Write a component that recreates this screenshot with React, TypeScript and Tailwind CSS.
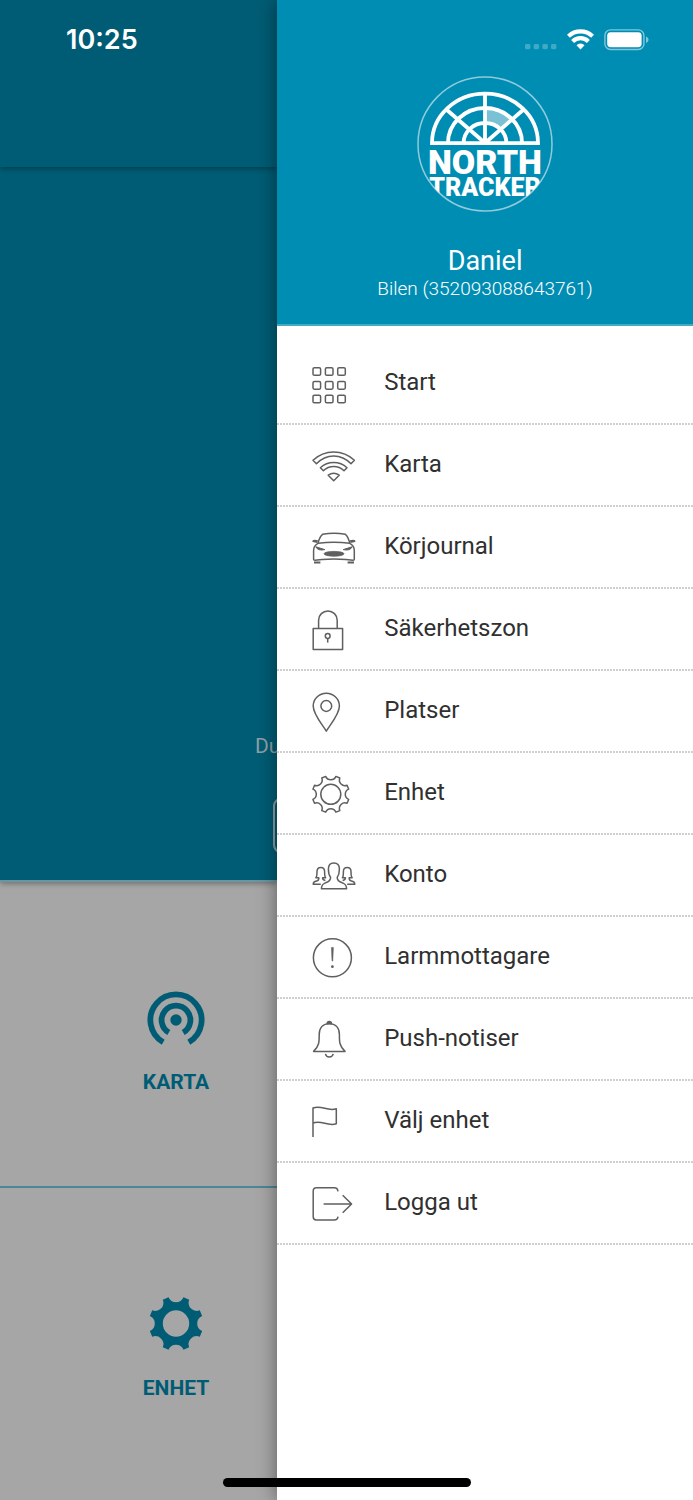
import React from "react";

function gearPath(cx: number, cy: number, r: number): string {
  const point = (deg: number) => {
    const a = (deg * Math.PI) / 180;
    return `${(cx + r * Math.sin(a)).toFixed(2)} ${(cy - r * Math.cos(a)).toFixed(2)}`;
  };
  const scoop = (r * 0.3).toFixed(2);
  let d = `M${point(-16)}`;
  for (let k = 0; k < 8; k++) {
    const a = k * 45;
    d += ` A${scoop} ${scoop} 0 0 0 ${point(a + 16)} L${point(a + 29)}`;
  }
  return d + "Z";
}

const icons: Record<string, React.ReactNode> = {
  grid: [8.5, 22.4, 36].map((y) =>
    [5.8, 18.2, 30.5].map((x) => (
      <rect key={`${x}-${y}`} x={x - 3.8} y={y - 3.8} width="7.6" height="7.6" rx="1.4" />
    )),
  ),
  wifi: (
    <>
      <path d="M2 15.3Q10.8 7 22.7 7T43.4 15.3L40 18.8Q32.5 11 22.7 11T5.4 18.8Z" />
      <path d="M9.4 22.7Q15 17.6 22.7 17.6T36 22.7L33 25.8Q28.6 21.6 22.7 21.6T12.4 25.8Z" />
      <path d="M17.2 30.2Q22.7 26.4 28.2 30.2L22.7 35.8Z" />
    </>
  ),
  car: (
    <>
      <path d="M7 16.3Q8.6 9.5 11.6 7.3Q23 5.2 34.4 7.3Q37.2 9.5 38.8 16.3" />
      <path d="M7 16.3Q23 14.4 38.8 16.3Q43.3 18.5 43.3 23.5V32.6Q43.3 33.2 42 33.2L35 32.4Q23 31.4 11 32.4L4 33.2Q2.6 33.2 2.6 32.6V23.5Q2.6 18.5 7 16.3Z" />
      <path d="M6.4 15.4L2 14.2Q2.6 12.8 6.8 14M39.4 15.4L43.8 14.2Q43.2 12.8 39 14" />
      <path
        d="M4.8 19.8L13.8 22.6Q7 24.2 4.8 19.8ZM41.2 19.8L32.2 22.6Q39 24.2 41.2 19.8Z"
        fill="currentColor"
        strokeWidth="1"
      />
      <ellipse cx="23" cy="26.8" rx="10" ry="2.4" fill="currentColor" strokeWidth="0.8" />
      <path d="M3 35.4H9.4M36.6 35.4H43" strokeWidth="2" />
    </>
  ),
  lock: (
    <>
      <path d="M2.2 19.4H31.6V40.4H2.2ZM7.6 19.4V11.2A9.3 9.3 0 0 1 26.2 11.2V19.4" />
      <circle cx="16.7" cy="27" r="2.4" />
      <path d="M16.7 29.4V33.6" />
    </>
  ),
  pin: (
    <>
      <path d="M15.3 40.2C12 34.4 2.2 23.5 2.2 15A13.1 12.8 0 0 1 28.4 15C28.4 23.5 18.6 34.4 15.3 40.2Z" />
      <circle cx="15.3" cy="15" r="5.4" />
    </>
  ),
  gear: (
    <>
      <path d={gearPath(19.8, 21.3, 18.6)} />
      <circle cx="19.8" cy="21.3" r="10" />
    </>
  ),
  people: (
    <>
      <path d="M10.4 33.8C10.4 25.2 19.6 29.6 19.6 22.4C18.2 20.6 17.4 17.6 17.4 14C17.4 9.8 19.4 8 22.8 8S28.4 9.8 28.4 14C28.4 17.6 27.5 20.6 26.2 22.4C26.2 29.6 35.6 25.2 35.6 33.8Z" />
      <path d="M9.8 29.2H2.2Q2.2 26.6 5.6 26Q8 25.6 7.8 22.8H4.8Q6 21.8 6 16.5Q6 12.4 9.8 12.4T13.6 16.5Q13.6 21.8 14.6 22.8H11.6Q11.4 25 14.4 25.6" />
      <path d="M36.2 29.2H43.8Q43.8 26.6 40.4 26Q38 25.6 38.2 22.8H41.2Q40 21.8 40 16.5Q40 12.4 36.2 12.4T32.4 16.5Q32.4 21.8 31.4 22.8H34.4Q34.6 25 31.6 25.6" />
    </>
  ),
  alert: (
    <>
      <circle cx="21.4" cy="20.8" r="19" />
      <path d="M20.4 10.4H22.4L21.8 24H21Z" fill="currentColor" strokeWidth="0.5" />
      <circle cx="21.4" cy="29.7" r="1.4" fill="currentColor" stroke="none" />
    </>
  ),
  bell: (
    <>
      <path d="M2.6 32.4C8.4 27 8.2 22.5 8.2 15.5C8.2 8.6 12.2 4.8 18.3 4.8S28.4 8.6 28.4 15.5C28.4 22.5 28.2 27 34 32.4Z" />
      <path d="M16.2 4.6A2.1 2.1 0 0 1 20.4 4.6Z" fill="currentColor" />
      <path d="M14.4 34.8A4 4 0 0 0 22.2 34.8" />
    </>
  ),
  flag: <path d="M2 36V7C11 3.8 16 10.6 25.3 7.8V22.8C16 25.6 11 18.8 2 22" />,
  logout: (
    <>
      <path d="M27 8.4Q26.6 4.8 23.4 4.8H5.4Q2.2 4.8 2.2 8V33.8Q2.2 37 5.4 37H23.4Q26.6 37 27 33.6" />
      <path d="M12.6 21H40.6M31.7 12.2L40.6 21L31.7 29.8" />
    </>
  ),
};

const menu: { label: string; icon: string }[] = [
  { label: "Start", icon: "grid" },
  { label: "Karta", icon: "wifi" },
  { label: "Körjournal", icon: "car" },
  { label: "Säkerhetszon", icon: "lock" },
  { label: "Platser", icon: "pin" },
  { label: "Enhet", icon: "gear" },
  { label: "Konto", icon: "people" },
  { label: "Larmmottagare", icon: "alert" },
  { label: "Push-notiser", icon: "bell" },
  { label: "Välj enhet", icon: "flag" },
  { label: "Logga ut", icon: "logout" },
];

function Logo() {
  return (
    <svg viewBox="0 0 136 136" className="size-[136px]" role="img" aria-label="North Tracker">
      <defs>
        <clipPath id="disc">
          <circle cx="68" cy="68" r="67" />
        </clipPath>
      </defs>
      <circle cx="68" cy="68" r="67" fill="none" stroke="#8fcbdc" strokeWidth="1.5" />
      <path
        d="M68 31.5A37 37 0 0 1 95.9 44.2L84.1 54.5A21.5 21.5 0 0 0 68 47Z"
        fill="#7bc1d6"
      />
      <g fill="none" stroke="#fff" strokeWidth="3.8">
        <path d="M15 67.2A53 49.5 0 0 1 121 67.2Z" />
        <path d="M31 67A37 35 0 0 1 105 67" />
        <path d="M46.6 67A21.4 20 0 0 1 89.4 67" />
        <path d="M68 67V18M68 67L30 34M68 67L106 34" />
      </g>
      <g
        clipPath="url(#disc)"
        fill="#fff"
        textAnchor="middle"
        fontFamily="Roboto, sans-serif"
        fontWeight="900"
      >
        <text x="68" y="98" fontSize="34">
          NORTH
        </text>
        <text x="68" y="120" fontSize="25">
          TRACKER
        </text>
      </g>
    </svg>
  );
}

function StatusIcons() {
  return (
    <div className="flex h-[22px] items-start justify-end pr-11 text-white">
      <svg viewBox="0 0 32 22" className="mr-2.5 h-[22px] w-8" aria-hidden="true">
        {[0, 8.7, 17.4, 26].map((x) => (
          <rect key={x} x={x} y="15" width="5.4" height="5.2" rx="1.4" fill="#fff" opacity="0.25" />
        ))}
      </svg>
      <svg viewBox="0 0 27 22" className="mr-2.5 h-[22px] w-[27px]" aria-hidden="true">
        <g fill="none" stroke="#fff" strokeWidth="4.2">
          <path d="M1.4 7.2A17.5 17.5 0 0 1 25.6 7.2" />
          <path d="M5.6 12.4A11.4 11.4 0 0 1 21.4 12.4" />
        </g>
        <path d="M9.5 16.2A5.6 5.6 0 0 1 17.5 16.2L13.5 20.4Z" fill="#fff" />
      </svg>
      <svg viewBox="0 0 45 22" className="h-[22px] w-[45px]" aria-hidden="true">
        <rect x="0.9" y="0.9" width="39" height="19.6" rx="5.6" fill="none" stroke="#fff" strokeWidth="1.4" opacity="0.5" />
        <rect x="3.2" y="3.2" width="34.4" height="15" rx="3.4" fill="#fff" />
        <path d="M42 7.4Q44.6 8.4 44.6 10.7T42 14Z" fill="#fff" opacity="0.5" />
      </svg>
    </div>
  );
}

export default function App() {
  return (
    <div className="relative flex min-h-screen w-full overflow-hidden bg-white font-[Roboto,sans-serif]">
      <main className="flex w-2/5 flex-col overflow-hidden bg-[#a6a6a6] text-[#005c74]">
        <header className="relative z-10 h-[167px] bg-[#005c74] pt-6 pl-[66px] shadow-[0_1px_6px_rgba(0,0,0,0.4)]">
          <time className="font-[Inter,sans-serif] text-[27px] leading-8 font-semibold text-white">
            10:25
          </time>
        </header>
        <section className="relative flex h-[715px] flex-col justify-end border-b-2 border-[#6b959f] bg-[#005c74] pb-[27px] shadow-[0_1px_6px_rgba(0,0,0,0.4)]">
          <p className="pl-[255px] text-[21px] leading-6 text-[#8d9fa5]">Du</p>
          <button
            type="button"
            aria-label="Uppdatera"
            className="mt-10 ml-[273px] h-[55px] w-[148px] rounded-lg border-2 border-[#8f9ea3]"
          />
        </section>
        <a
          href="#karta"
          className="flex h-[306px] w-[352px] flex-col items-center border-b-2 border-[#4b8796] pt-[109px]"
        >
          <svg viewBox="0 0 58 58" className="size-[58px]" aria-hidden="true">
            <g fill="none" stroke="currentColor" strokeWidth="5.8">
              <path d="M16.2 51.2A25.6 25.6 0 1 1 41.8 51.2" />
              <path d="M21.8 41.5A14.4 14.4 0 1 1 36.2 41.5" />
            </g>
            <circle cx="29" cy="29" r="5.7" fill="currentColor" />
          </svg>
          <span className="mt-[19px] text-[21px] leading-7 font-bold">KARTA</span>
        </a>
        <a href="#enhet" className="flex h-[306px] w-[352px] flex-col items-center pt-[109px]">
          <svg viewBox="0 0 58 58" className="size-[58px]" aria-hidden="true">
            <path
              d={gearPath(29, 26.5, 27.2) + "M42.2 26.5A13.2 13.2 0 1 0 15.8 26.5A13.2 13.2 0 1 0 42.2 26.5Z"}
              fill="currentColor"
              fillRule="evenodd"
            />
          </svg>
          <span className="mt-[19px] text-[21px] leading-7 font-bold">ENHET</span>
        </a>
      </main>

      <aside className="relative z-20 w-3/5 bg-white shadow-[0_0_18px_rgba(0,0,0,0.45)]">
        <header className="flex h-[326px] flex-col border-b-2 border-[#43a9c5] bg-[#008db3] pt-[29px] text-center text-white">
          <StatusIcons />
          <div className="mt-[25px] flex justify-center">
            <Logo />
          </div>
          <h1 className="mt-[33px] text-[27px] leading-8">Daniel</h1>
          <p className="text-[19px] leading-6 font-light">Bilen (352093088643761)</p>
        </header>
        <nav className="pt-[17px]">
          <ul>
            {menu.map(({ label, icon }) => (
              <li key={label}>
                <a href={`#${icon}`} className="flex h-20 items-start gap-[29px] pt-5 pl-[34px]">
                  <svg
                    viewBox="0 0 44 44"
                    className="size-11 shrink-0 overflow-visible text-[#5f5f5f]"
                    fill="none"
                    stroke="currentColor"
                    strokeWidth="1.5"
                    strokeLinejoin="round"
                    aria-hidden="true"
                  >
                    {icons[icon]}
                  </svg>
                  <span className="text-[24px] leading-[38px] text-[#303030]">{label}</span>
                </a>
                <div className="h-0.5 bg-[repeating-linear-gradient(to_right,#d0d0d0_0_2px,#ffffff_2px_3px)]" />
              </li>
            ))}
          </ul>
        </nav>
      </aside>

      <div className="absolute bottom-[13px] left-1/2 z-30 h-[9px] w-[248px] -translate-x-1/2 rounded-full bg-black" />
    </div>
  );
}
